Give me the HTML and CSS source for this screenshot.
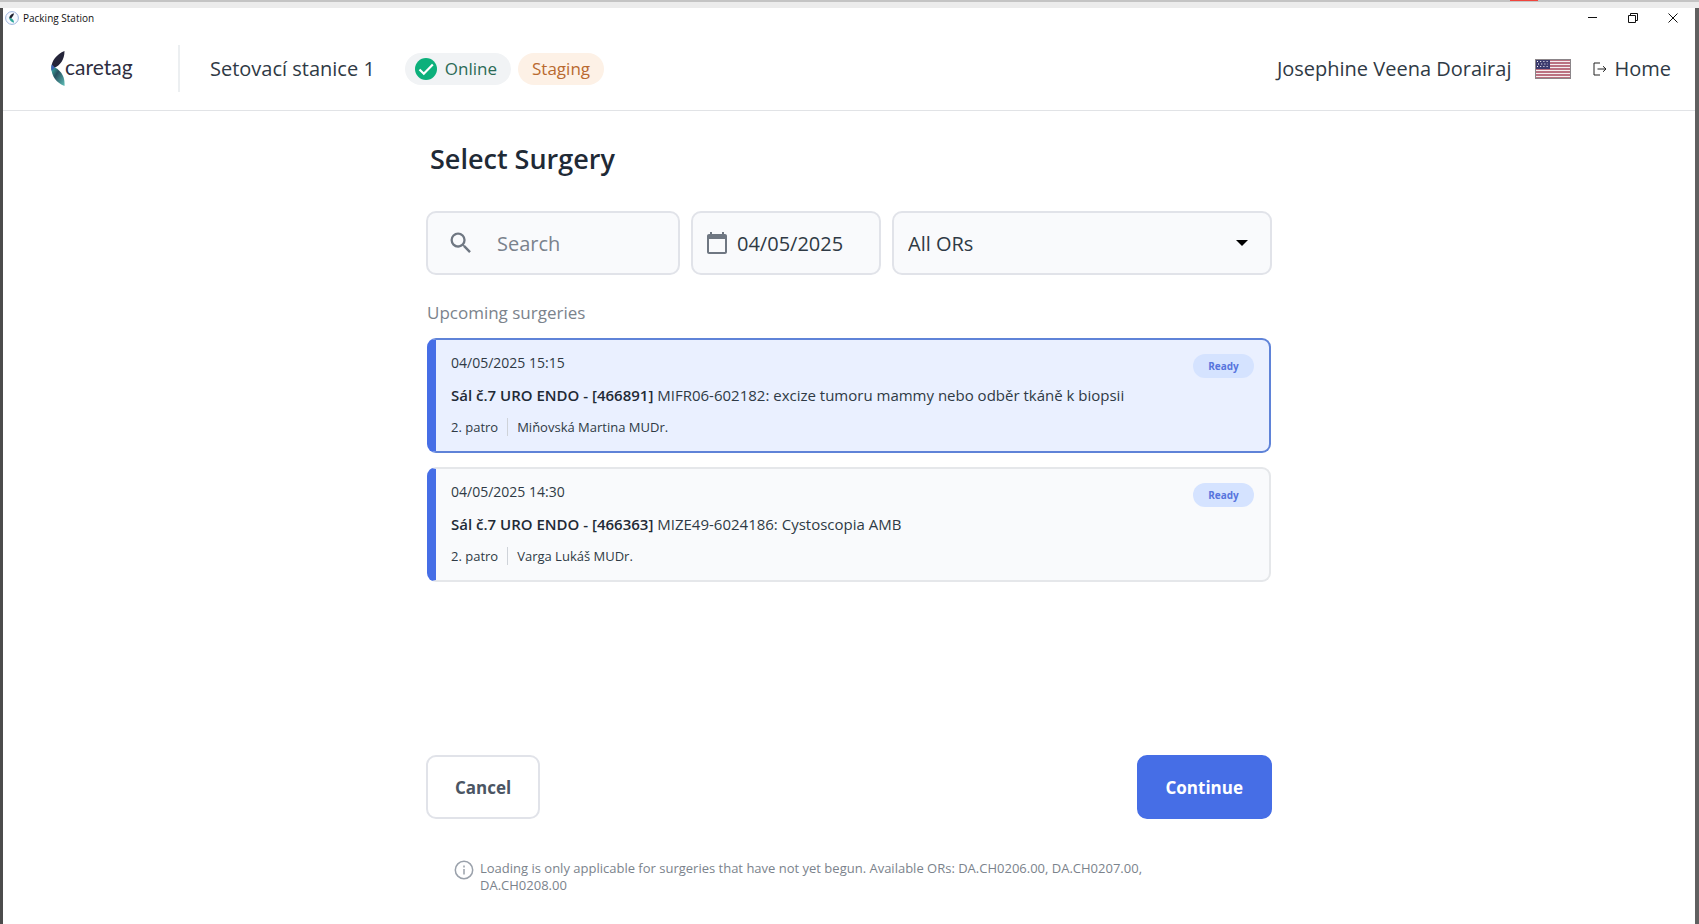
FILE: index.html
```html
<!DOCTYPE html>
<html lang="en">
<head>
    <meta charset="UTF-8">
    <meta name="viewport" content="width=device-width, initial-scale=1.0">
    <title>Packing Station</title>
    <link rel="stylesheet" href="styles.css">
</head>
<body>
    <div class="top-strip"><span class="top-mark"></span></div>
    <div class="window">
        <div class="titlebar">
            <svg class="app-icon" viewBox="0 0 14 14">
                <circle cx="7" cy="7" r="6.4" fill="#f6f9ff" stroke="#9db4dc"/>
                <path d="M9 2.2C6 3 4.200 5 4.200 7.200L6 8C7 5.500 8.800 5 9 2.200z" fill="#1f2030"/>
                <path d="M4.200 6.500C4.200 9 6 11 9 11.800C9 9.500 8 8 6 7.200z" fill="#2fa79b"/>
            </svg>
            <span class="app-name">Packing Station</span>
            <div class="window-controls">
                <button aria-label="Minimize"><svg viewBox="0 0 10 10"><path d="M0 4.500h9"/></svg></button>
                <button aria-label="Restore"><svg viewBox="0 0 10 10"><path d="M.5 2.500h7v7h-7zM2.500 2.500v-2h7v7h-2"/></svg></button>
                <button aria-label="Close"><svg viewBox="0 0 10 10"><path d="M.5.5l9 9M9.500.5l-9 9"/></svg></button>
            </div>
        </div>

        <header class="header">
            <div class="logo">
                <svg class="logo-mark" viewBox="0 0 14 35">
                    <defs>
                        <linearGradient id="wing" x1="0" y1="0" x2="1" y2="1">
                            <stop offset="0" stop-color="#3ec6b4"/>
                            <stop offset=".4" stop-color="#27505f"/>
                            <stop offset="1" stop-color="#5fc0b8"/>
                        </linearGradient>
                    </defs>
                    <path d="M13.500 0C5 3.500-.5 11 .5 19L4 16.500C9 14 13.500 9 13.500 0z" fill="#25253a"/>
                    <path d="M.5 15C-.5 24 5 32 13.500 35C14 28 12 21 4 16.500z" fill="url(#wing)"/>
                    <path d="M.8 13.500C.2 15.500.2 18 .7 20L4 16.500z" fill="#3d62b5"/>
                </svg>
                <span class="logo-text">caretag</span>
            </div>
            <span class="station">Setovací stanice 1</span>
            <span class="chip chip-online">
                <svg viewBox="0 0 22 22"><circle cx="11" cy="11" r="11" fill="#0cb07b"/><path d="M4.500 11.500l4.300 4.300 9-9.300" fill="none" stroke="#fff" stroke-width="2.200"/></svg>
                Online
            </span>
            <span class="chip chip-staging">Staging</span>

            <div class="header-right">
                <span class="user">Josephine Veena Dorairaj</span>
                <svg class="flag" viewBox="0 0 36 20">
                    <rect width="36" height="20" fill="#f4eef0"/>
                    <path d="M0 1h36M0 4h36M0 7h36M0 10h36M0 13h36M0 16h36M0 19h36" stroke="#a8485c" stroke-width="1.500"/>
                    <rect width="15" height="10" fill="#3c3b6e"/>
                    <path d="M2 2.500h11M3 5h10M2 7.500h11" stroke="#fff" stroke-dasharray="1 2.200"/>
                    <rect x=".5" y=".5" width="35" height="19" fill="none" stroke="#8b8589"/>
                </svg>
                <a class="home" href="#">
                    <svg viewBox="0 0 14 14"><path d="M7 1H1v12h6M4.500 7h8.500M10 4.200l3 2.800-3 2.800"/></svg>
                    Home
                </a>
            </div>
        </header>

        <main class="content">
            <h1>Select Surgery</h1>

            <div class="filters">
                <label class="field field-search">
                    <svg viewBox="0 0 24 24"><path d="M15.500 14h-.79l-.28-.27A6.471 6.471 0 0 0 16 9.500 6.500 6.500 0 1 0 9.500 16c1.610 0 3.090-.59 4.230-1.570l.27.28v.79l5 4.990L20.490 19l-4.990-5zm-6 0C7.010 14 5 11.990 5 9.500S7.010 5 9.500 5 14 7.010 14 9.500 11.990 14 9.500 14z"/></svg>
                    <input type="text" placeholder="Search" aria-label="Search">
                </label>
                <label class="field field-date">
                    <svg viewBox="0 0 24 24"><path d="M20 3h-1V1h-2v2H7V1H5v2H4c-1.100 0-2 .9-2 2v16c0 1.100.9 2 2 2h16c1.100 0 2-.9 2-2V5c0-1.100-.9-2-2-2zm0 18H4V8h16v13z"/></svg>
                    <input type="text" value="04/05/2025" aria-label="Date">
                </label>
                <div class="field field-room">
                    <select aria-label="Operating room">
                        <option>All ORs</option>
                    </select>
                    <svg class="caret" viewBox="0 0 12 6"><path d="M0 0h12L6 6z"/></svg>
                </div>
            </div>

            <h2>Upcoming surgeries</h2>

            <div class="surgery selected">
                <div class="time">04/05/2025 15:15</div>
                <div class="name"><b>Sál č.7 URO ENDO - [466891]</b> MIFR06-602182: excize tumoru mammy nebo odběr tkáně k biopsii</div>
                <div class="meta"><span>2. patro</span><span>Miňovská Martina MUDr.</span></div>
                <span class="badge">Ready</span>
            </div>
            <div class="surgery">
                <div class="time">04/05/2025 14:30</div>
                <div class="name"><b>Sál č.7 URO ENDO - [466363]</b> MIZE49-6024186: Cystoscopia AMB</div>
                <div class="meta"><span>2. patro</span><span>Varga Lukáš MUDr.</span></div>
                <span class="badge">Ready</span>
            </div>

            <div class="actions">
                <button class="btn">Cancel</button>
                <button class="btn btn-primary">Continue</button>
            </div>

            <div class="note">
                <svg viewBox="0 0 20 20"><circle cx="10" cy="10" r="8.700"/><path d="M10 9v5.500M10 5.500v2"/></svg>
                <p>Loading is only applicable for surgeries that have not yet begun. Available ORs: DA.CH0206.00, DA.CH0207.00, DA.CH0208.00</p>
            </div>
        </main>
    </div>
</body>
</html>
```
FILE: styles.css
```css
* {
    box-sizing: border-box;
}
body {
    margin: 0;
    min-height: 100vh;
    display: flex;
    flex-direction: column;
    font-family: "Open Sans", "Noto Sans", sans-serif;
    color: #2f3a45;
    background: #ececec;
}
input, select, button {
    font-family: inherit;
    color: inherit;
}
svg {
    flex: none;
}
.top-strip {
    height: 8px;
    display: flex;
    justify-content: flex-end;
    border-top: 2px solid #c4c4c4;
}
.top-mark {
    width: 28px;
    height: 1px;
    margin: -2px 161px 0 0;
    background: #f0443c;
}
.window {
    flex: 1;
    display: flex;
    flex-direction: column;
    background: #fff;
    border-left: 3px solid #4c4c4c;
    border-right: 4px solid #606060;
}

/* Title bar */
.titlebar {
    display: flex;
    align-items: center;
    height: 19px;
    padding: 0 17px 0 2px;
}
.app-icon {
    width: 14px;
    height: 14px;
}
.app-name {
    margin-left: 4px;
    font-size: 10px;
    color: #111;
}
.window-controls {
    display: flex;
    gap: 30px;
    margin-left: auto;
}
.window-controls button {
    display: flex;
    padding: 0;
    border: none;
    background: none;
}
.window-controls svg {
    width: 10px;
    height: 10px;
    fill: none;
    stroke: #111;
}

/* Header */
.header {
    display: flex;
    align-items: center;
    height: 84px;
    padding: 0 24px 0 48px;
    border-bottom: 1px solid #e1e3e6;
}
.logo {
    display: flex;
    align-items: center;
    width: 129px;
    height: 47px;
    border-right: 2px solid #eceff1;
}
.logo-mark {
    width: 14px;
    height: 35px;
}
.logo-text {
    font-family: Lato, sans-serif;
    font-size: 21px;
    line-height: 20px;
    color: #2e2e40;
    padding-bottom: 4px;
}
.station {
    margin: 0 30px;
    font-size: 20px;
}
.chip {
    display: flex;
    align-items: center;
    gap: 8px;
    height: 32px;
    padding: 0 14px;
    border-radius: 16px;
    font-size: 17px;
}
.chip svg {
    width: 22px;
    height: 22px;
}
.chip-online {
    padding-left: 10px;
    margin-right: 7px;
    background: #f1f3f5;
    color: #2b6a56;
}
.chip-staging {
    background: #fdf1e6;
    color: #b9692f;
}
.header-right {
    display: flex;
    align-items: center;
    margin-left: auto;
    font-size: 20px;
}
.flag {
    width: 36px;
    height: 20px;
    margin: 0 22px 0 24px;
}
.home {
    display: flex;
    align-items: center;
    gap: 7px;
    color: inherit;
    text-decoration: none;
}
.home svg {
    width: 14px;
    height: 14px;
    fill: none;
    stroke: #222;
}

/* Content */
.content {
    width: 100%;
    max-width: 846px;
    margin: 0 auto;
    padding-top: 28px;
}
h1 {
    margin: 0 4px 32px;
    font-size: 27px;
    line-height: 40px;
    font-weight: 600;
    color: #1f2a36;
}
.filters {
    display: grid;
    grid-template-columns: 254fr 190fr 380fr;
    gap: 11px;
}
.field {
    display: flex;
    align-items: center;
    height: 64px;
    border: 2px solid #e1e3e9;
    border-radius: 10px;
    background: #f9fafc;
}
.field input, .field select {
    width: 100%;
    min-width: 0;
    padding: 0;
    border: none;
    outline: none;
    background: none;
    font-size: 20px;
}
.field input::placeholder {
    color: #7a828c;
}
.field svg {
    fill: #6f7782;
}
.field-search {
    gap: 22px;
    padding: 0 19px;
}
.field-search svg {
    width: 28px;
    height: 28px;
}
.field-date {
    gap: 8px;
    padding: 0 10px 0 12px;
}
.field-date svg {
    width: 24px;
    height: 24px;
}
.field-room {
    padding: 0 22px 0 14px;
}
.field-room select {
    appearance: none;
}
.field-room .caret {
    width: 12px;
    height: 6px;
    fill: #000;
}
h2 {
    margin: 25px 1px 12px;
    font-size: 17px;
    line-height: 26px;
    font-weight: 400;
    color: #7b838c;
}

/* Surgery cards */
.surgery {
    position: relative;
    margin: 0 1px 14px;
    padding: 7px 16px 8px 15px;
    border: 2px solid #e5e7ea;
    border-left: 9px solid #466ee6;
    border-radius: 9px;
    background: #f9fafc;
}
.surgery.selected {
    border-color: #5f83d8;
    border-left-color: #466ee6;
    background: #eaf0ff;
}
.time, .name {
    line-height: 32px;
}
.time {
    font-size: 14px;
}
.name {
    font-size: 15px;
}
.name b {
    font-weight: 600;
    color: #1f2a36;
}
.meta {
    display: flex;
    align-items: center;
    height: 32px;
    font-size: 13px;
    line-height: 18px;
}
.meta span + span {
    margin-left: 9px;
    padding-left: 9px;
    border-left: 1px solid #cfd3d9;
}
.badge {
    position: absolute;
    top: 14px;
    right: 15px;
    width: 61px;
    border-radius: 12px;
    background: #d5e3ff;
    color: #5775dd;
    font-size: 10px;
    line-height: 24px;
    font-weight: 700;
    text-align: center;
}

/* Footer */
.actions {
    display: flex;
    justify-content: space-between;
    margin-top: 173px;
}
.btn {
    height: 64px;
    padding: 0 27px;
    border: 2px solid #e1e3e9;
    border-radius: 10px;
    background: #fff;
    color: #4b5563;
    font-size: 17px;
    font-weight: 700;
}
.btn-primary {
    border-color: #466ee6;
    background: #466ee6;
    color: #fff;
}
.note {
    display: flex;
    gap: 6px;
    margin: 41px 90px 24px 28px;
    font-size: 13px;
    line-height: 17px;
    color: #7b838c;
}
.note svg {
    width: 20px;
    height: 20px;
    fill: none;
    stroke: #9aa1ab;
    stroke-width: 1.5;
}
.note p {
    margin: 0;
}
```
